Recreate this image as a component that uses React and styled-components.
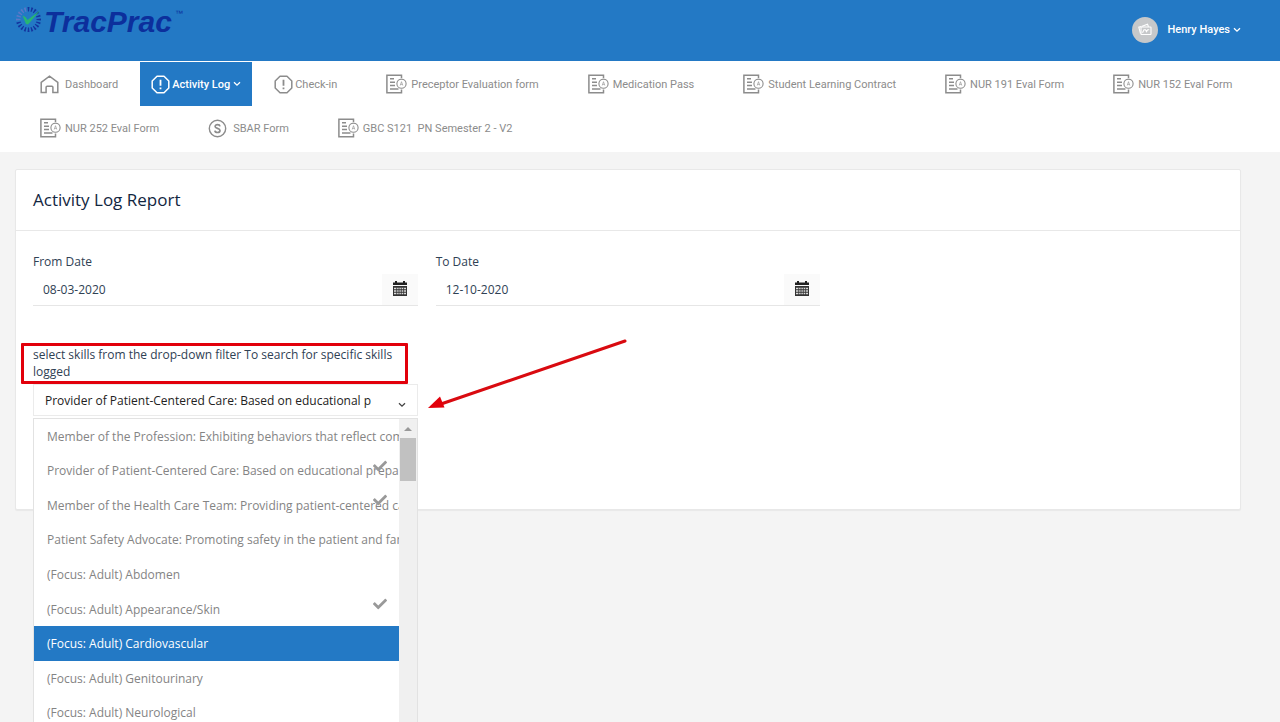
import React, { useState } from 'react';
import styled, { createGlobalStyle } from 'styled-components';
import { FaCheck } from 'react-icons/fa';

const GlobalStyle = createGlobalStyle`
    * {
        box-sizing: border-box;
    }

    body {
        margin: 0;
        background-color: #f4f4f4;
        color: #2f4154;
        font-family: "Open Sans", sans-serif;
        font-size: 12px;
        line-height: 17px;
    }
`;

const Page = styled.div`
    height: 100vh;
    overflow: hidden;
`;

// Blue top bar with logo and user menu
const Header = styled.header`
    display: flex;
    justify-content: space-between;
    height: 61px;
    padding: 0 39px 2px 15px;
    background-color: #2379c5;
`;

const Logo = styled.a`
    display: flex;
    align-items: flex-start;
    padding-top: 6px;
    color: #0c2f9c;
    font-family: "Liberation Sans", sans-serif;
    text-decoration: none;
`;

const LogoText = styled.span`
    margin-left: 2px;
    font-size: 30px;
    line-height: 32px;
    font-style: italic;
    font-weight: 700;
`;

const TradeMark = styled.sup`
    margin-left: 3px;
    font-size: 8px;
    line-height: 16px;
`;

const UserButton = styled.button`
    display: flex;
    align-items: center;
    align-self: center;
    padding: 0;
    border: 0;
    background: none;
    color: white;
    font-family: Roboto, sans-serif;
    font-size: 11px;
    font-weight: 500;
    cursor: pointer;
`;

const Avatar = styled.span`
    display: flex;
    align-items: center;
    justify-content: center;
    width: 26px;
    height: 26px;
    margin-right: 10px;
    border-radius: 50%;
    background-color: #c6c8ca;
`;

// Menu that wraps on to a second line
const Nav = styled.nav`
    display: flex;
    flex-wrap: wrap;
    column-gap: 11px;
    padding: 1px 0 2px 29px;
    background-color: white;
`;

const NavLink = styled.a`
    display: flex;
    align-items: center;
    height: 44px;
    margin-right: ${(props) => (props.$wide ? '16px' : '0')};
    padding: 0 11px;
    background-color: ${(props) => (props.$active ? '#2379c5' : 'transparent')};
    color: ${(props) => (props.$active ? 'white' : '#8c8c8c')};
    font-family: Roboto, sans-serif;
    font-size: 11px;
    font-weight: ${(props) => (props.$active ? 500 : 400)};
    text-decoration: none;
    white-space: pre;
`;

const IconSlot = styled.span`
    display: flex;
    width: ${(props) => (props.$tight ? '21px' : '25px')};
`;

const ChevronIcon = styled.svg`
    width: 8px;
    height: 6px;
    margin-left: 3px;
`;

const Card = styled.section`
    margin: 17px 39px 0 15px;
    border: 1px solid #e8e8e8;
    border-radius: 2px;
    background-color: white;
    box-shadow: 0 1px 1px rgba(0, 0, 0, 0.05);
`;

const CardTitle = styled.h1`
    margin: 0;
    padding: 18px 17px;
    border-bottom: 1px solid #e8e8e8;
    color: #12263f;
    font-size: 17px;
    font-weight: 400;
    line-height: 24px;
`;

const Filters = styled.form`
    display: grid;
    grid-template-columns: repeat(3, 1fr);
    gap: 40px 18px;
    padding: 22px 17px 93px;
`;

const Field = styled.div`
    position: relative;
    grid-column-start: ${(props) => props.$column};
`;

const Label = styled.label`
    display: block;
    margin-bottom: 4px;
`;

const DateGroup = styled.div`
    display: flex;
    height: 32px;
    border-bottom: 1px solid #e6e6e6;
`;

const DateInput = styled.input`
    flex: 1;
    min-width: 0;
    padding: 0 10px;
    border: 0;
    outline: none;
    background: none;
    color: #2f4154;
    font: inherit;
`;

const DateButton = styled.button`
    display: flex;
    align-items: center;
    justify-content: center;
    width: 36px;
    padding: 0 0 2px;
    border: 0;
    background-color: #fafafa;
    cursor: pointer;
`;

const SelectWrap = styled.div`
    position: relative;
`;

const Select = styled.select`
    display: block;
    width: 100%;
    height: 32px;
    padding: 0 40px 0 11px;
    border: 1px solid #ebebeb;
    outline: none;
    appearance: none;
    background-color: white;
    color: #222;
    font-family: inherit;
    font-size: 12px;
    font-weight: 400;
`;

const SelectChevron = styled(ChevronIcon)`
    position: absolute;
    right: 12px;
    bottom: 8px;
    pointer-events: none;
`;

// Open list under the select
const Dropdown = styled.div`
    position: absolute;
    top: 100%;
    left: 0;
    right: 0;
    display: flex;
    margin-top: 2px;
    border: 1px solid #e2e2e2;
    background-color: white;
`;

const OptionList = styled.ul`
    flex: 1;
    display: grid;
    grid-auto-rows: 1fr;
    min-width: 0;
    height: 311px;
    margin: 0;
    padding: 0;
    list-style: none;
`;

const Option = styled.li`
    position: relative;
    display: flex;
    align-items: center;
    overflow: hidden;
    padding-left: 13px;
    background-color: ${(props) => (props.$active ? '#2379c5' : 'white')};
    color: ${(props) => (props.$active ? 'white' : '#848484')};
    font-weight: 500;
    white-space: nowrap;
    cursor: pointer;
`;

const Tick = styled(FaCheck)`
    position: absolute;
    top: 5px;
    right: 12px;
    width: 14px;
    height: 14px;
    color: #999;
`;

const Scrollbar = styled.div`
    display: flex;
    flex-direction: column;
    align-items: center;
    width: 18px;
    background-color: #f0f0f0;
`;

const ScrollArrow = styled.svg`
    width: 8px;
    height: 4px;
    margin: 8px 0 7px;
`;

const ScrollThumb = styled.div`
    width: 16px;
    height: 43px;
    background-color: #c1c1c1;
`;

// Red marks laid over the form
const HighlightBox = styled.div`
    position: absolute;
    top: -3px;
    left: -12px;
    right: 10px;
    height: 41px;
    border: 3px solid #e2000b;
    border-radius: 1px;
    pointer-events: none;
`;

const PointerArrow = styled.svg`
    position: absolute;
    top: -7px;
    left: calc(100% + 9px);
    width: 202px;
    height: 74px;
    pointer-events: none;
`;

const Chevron = ({ as: Icon = ChevronIcon, color = 'currentColor' }) => (
    <Icon viewBox="0 0 8 6" fill="none" stroke={color} strokeWidth="1.3" aria-hidden="true">
        <path d="M1 1.2l3 3 3-3" />
    </Icon>
);

const LogoMark = () => (
    <svg width="27" height="27" viewBox="-13.5 -13.5 27 27" aria-hidden="true">
        {Array.from({ length: 20 }, (_, i) => (
            <path
                key={i}
                d="M-.5-8L-1-12.500H1L.5-8z"
                fill={i > 14 ? '#5b78c8' : '#14349f'}
                transform={`rotate(${i * 18})`}
            />
        ))}
        <path d="M-6-4L-3-2.500L-1 .5L12-9.500L-.5 5L-2.500 4.500z" fill="#27b573" />
    </svg>
);

const HomeIcon = () => (
    <svg width="19" height="19" viewBox="0 0 19 19" fill="none" stroke="currentColor" strokeWidth="1.5">
        <path d="M1.200 7.300L9.500 1.200l8.300 6.100v10.200h-4.900v-5.300c0-.7-.3-1-1-1H7.100c-.7 0-1 .3-1 1v5.300H1.200z" />
    </svg>
);

const AlertIcon = () => (
    <svg width="19" height="19" viewBox="0 0 19 19" fill="none" stroke="currentColor" strokeWidth="1.500">
        <path d="M6 1.200h7L17.800 6v7L13 17.800H6L1.200 13V6z" strokeLinejoin="round" />
        <path d="M9.500 4.800v6M9.500 12.400v1.800" strokeWidth="1.800" />
    </svg>
);

const DocIcon = () => (
    <svg width="21" height="20" viewBox="0 0 21 20" fill="none" stroke="currentColor" strokeWidth="1.500">
        <path d="M15.500 4V1.200H.9v17.600h14.600v-3.300" />
        <path d="M4 4.800h4M4 8.200h5M4 11.500h5M4 15h8.500" strokeWidth="1.500" />
        <circle cx="15.500" cy="9.700" r="4.600" strokeWidth="1.100" />
        <path d="M14.200 11.500l1.300-3.800 1.300 3.800M14.600 10.400h1.800" strokeWidth=".6" />
    </svg>
);

const SbarIcon = () => (
    <svg width="19" height="19" viewBox="0 0 19 19" fill="none" stroke="currentColor" strokeWidth="1.400">
        <circle cx="9.500" cy="9.500" r="8.200" />
        <path
            d="M12 7.300c-.2-1.100-1.100-1.700-2.500-1.700S7.100 6.300 7.100 7.500c0 2.500 4.900 1.300 4.900 4 0 1.300-1.100 2-2.500 2s-2.500-.7-2.600-1.900"
            strokeWidth="1.700"
        />
    </svg>
);

const PhotosIcon = () => (
    <svg width="14" height="13" viewBox="0 0 14 13" fill="none" stroke="white" strokeWidth="1.100">
        <rect x="3" y="4" width="10" height="7.500" rx=".5" />
        <path d="M2.500 10.500L.8 4.200l2.200-.6M3.500 3.600L9.500 1.200l1 2.600M4.500 9.800l1.500-3h1.500l1 1.800 1.200-1.800h1.500" />
    </svg>
);

const CalendarIcon = () => (
    <svg width="14" height="15" viewBox="0 0 14 15" aria-hidden="true">
        <path d="M0 1.500h2V0h2v1.500h6V0h2v1.500h2V4H0z" fill="#222" />
        <path d="M0 5h14v10H0z" fill="#333" />
        <path d="M1 7.500h12M1 10h12M1 12.500h12" stroke="#ddd" strokeWidth="1.500" />
        <path d="M3.700 6.500V14M6 6.500V14M8.300 6.500V14M10.600 6.500V14" stroke="#333" strokeWidth=".8" />
    </svg>
);

const menu = [
    { text: 'Dashboard', icon: HomeIcon },
    { text: 'Activity Log', icon: AlertIcon, tight: true, active: true },
    { text: 'Check-in', icon: AlertIcon, tight: true, wide: true },
    { text: 'Preceptor Evaluation form', icon: DocIcon, wide: true },
    { text: 'Medication Pass', icon: DocIcon, wide: true },
    { text: 'Student Learning Contract', icon: DocIcon, wide: true },
    { text: 'NUR 191 Eval Form', icon: DocIcon, wide: true },
    { text: 'NUR 152 Eval Form', icon: DocIcon, wide: true },
    { text: 'NUR 252 Eval Form', icon: DocIcon, wide: true },
    { text: 'SBAR Form', icon: SbarIcon, wide: true },
    { text: 'GBC S121  PN Semester 2 - V2', icon: DocIcon, wide: true },
];

const skills = [
    'Member of the Profession: Exhibiting behaviors that reflect com',
    'Provider of Patient-Centered Care: Based on educational prepar',
    'Member of the Health Care Team: Providing patient-centered ca',
    'Patient Safety Advocate: Promoting safety in the patient and fam',
    '(Focus: Adult) Abdomen',
    '(Focus: Adult) Appearance/Skin',
    '(Focus: Adult) Cardiovascular',
    '(Focus: Adult) Genitourinary',
    '(Focus: Adult) Neurological',
];

const DateField = ({ id, label, initial }) => {
    const [value, setValue] = useState(initial)

    return (
        <Field>
            <Label htmlFor={id}>{label}</Label>
            <DateGroup>
                <DateInput id={id} type="text" value={value} onChange={(e) => setValue(e.target.value)} />
                <DateButton type="button" aria-label={`Choose ${label}`}>
                    <CalendarIcon />
                </DateButton>
            </DateGroup>
        </Field>
    );
};

const SkillFilter = () => {
    const [selected, setSelected] = useState([1, 2, 5])
    const [active, setActive] = useState(6)

    const toggle = (index) => {
        setSelected(selected.includes(index) ? selected.filter((i) => i !== index) : [...selected, index])
    }

    return (
        <Field $column="1">
            <Label htmlFor="skills">
                select skills from the drop-down filter To search for specific skills logged
            </Label>
            <SelectWrap>
                <Select id="skills" defaultValue="1">
                    <option value="1">Provider of Patient-Centered Care: Based on educational p</option>
                </Select>
                <Chevron as={SelectChevron} color="#444" />
            </SelectWrap>
            <Dropdown>
                <OptionList role="listbox" aria-label="Skills" aria-multiselectable="true">
                    {skills.map((skill, index) => (
                        <Option
                            key={skill}
                            role="option"
                            aria-selected={selected.includes(index)}
                            $active={index === active}
                            onMouseEnter={() => setActive(index)}
                            onClick={() => toggle(index)}
                        >
                            {skill}
                            {selected.includes(index) && <Tick />}
                        </Option>
                    ))}
                </OptionList>
                <Scrollbar>
                    <ScrollArrow viewBox="0 0 8 4">
                        <path d="M0 4l4-4 4 4z" fill="#999" />
                    </ScrollArrow>
                    <ScrollThumb />
                </Scrollbar>
            </Dropdown>
            <HighlightBox />
            <PointerArrow viewBox="0 0 202 74">
                <path d="M14 65L198 2" stroke="#d90a10" strokeWidth="3" strokeLinecap="round" />
                <path d="M1 69l12-11.500 4.500 11z" fill="#e2000b" />
            </PointerArrow>
        </Field>
    );
};

const App = () => {
    return (
        <Page>
            <GlobalStyle />
            <Header>
                <Logo href="#">
                    <LogoMark />
                    <LogoText>TracPrac</LogoText>
                    <TradeMark>™</TradeMark>
                </Logo>
                <UserButton type="button">
                    <Avatar>
                        <PhotosIcon />
                    </Avatar>
                    Henry Hayes
                    <Chevron />
                </UserButton>
            </Header>
            <Nav>
                {menu.map(({ text, icon: Icon, tight, wide, active }) => (
                    <NavLink key={text} href="#" $wide={wide} $active={active}>
                        <IconSlot $tight={tight}>
                            <Icon />
                        </IconSlot>
                        {text}
                        {active && <Chevron />}
                    </NavLink>
                ))}
            </Nav>
            <Card>
                <CardTitle>Activity Log Report</CardTitle>
                <Filters>
                    <DateField id="from-date" label="From Date" initial="08-03-2020" />
                    <DateField id="to-date" label="To Date" initial="12-10-2020" />
                    <SkillFilter />
                </Filters>
            </Card>
        </Page>
    );
};

export default App;
